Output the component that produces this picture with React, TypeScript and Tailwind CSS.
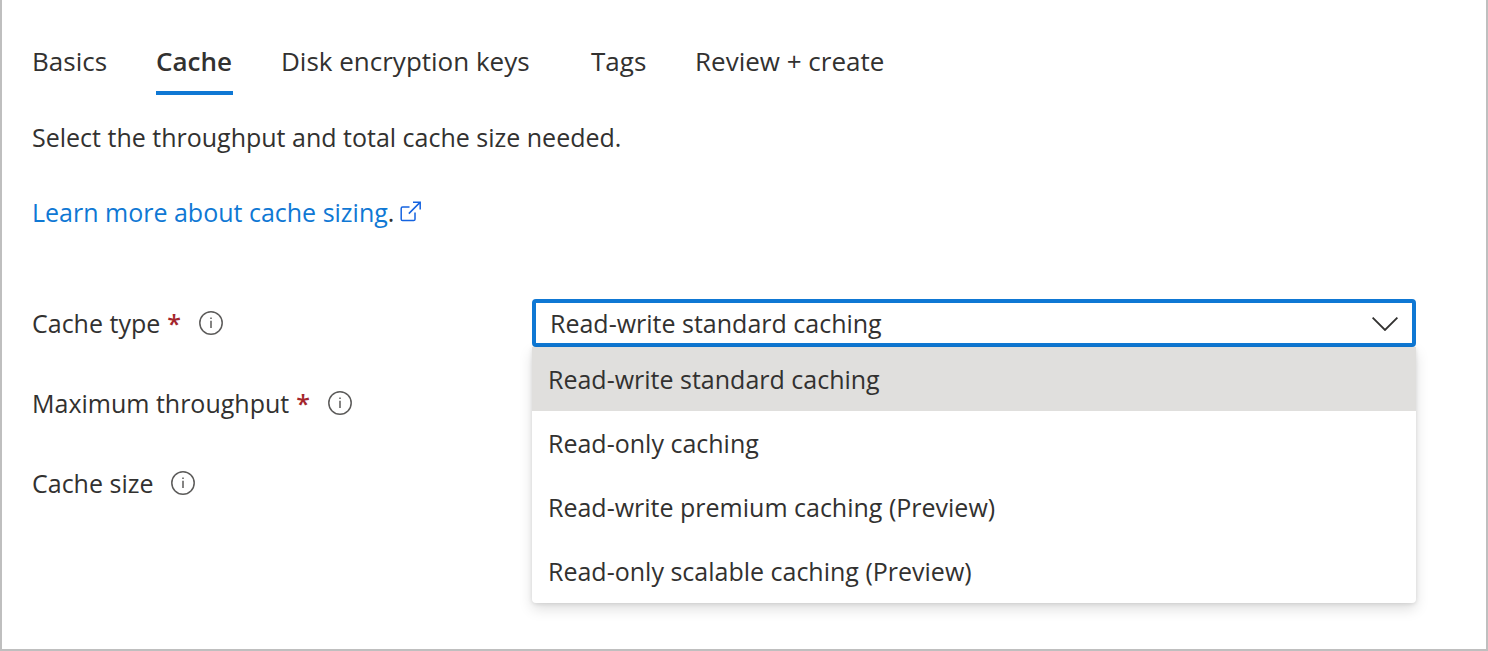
import { useState } from 'react';

const tabs = [
  { name: 'Basics', width: 'min-w-[76px]' },
  { name: 'Cache', width: 'min-w-[77px]' },
  { name: 'Disk encryption keys', width: 'min-w-[262px]' },
  { name: 'Tags', width: 'min-w-[56px]' },
  { name: 'Review + create', width: 'min-w-[196px]' },
];

const cacheTypes = [
  'Read-write standard caching',
  'Read-only caching',
  'Read-write premium caching (Preview)',
  'Read-only scalable caching (Preview)',
];

function InfoButton({ label }: { label: string }) {
  return (
    <button type="button" aria-label={label} className="shrink-0">
      <svg viewBox="0 0 24 24" className="size-6" fill="none" stroke="#5c5b5a">
        <circle cx="12" cy="12" r="11.2" strokeWidth="1.5" />
        <path d="M12 9.8V17M12 6.4V8" strokeWidth="1.5" />
      </svg>
    </button>
  );
}

function Required() {
  return <span className="ml-[7px] font-semibold text-[#a4262c]">*</span>;
}

export default function App() {
  const [tab, setTab] = useState('Cache');
  const [cacheType, setCacheType] = useState(cacheTypes[0]);

  return (
    <main className="min-h-screen border-x-2 border-b-2 border-[#bfbfbf] bg-white pr-[70px] pl-[30px] pt-9 font-['Open_Sans','Noto_Sans',sans-serif] text-[25px] leading-8 text-[#323130]">
      <nav className="flex gap-12 text-[26px]">
        {tabs.map(({ name, width }) => (
          <button
            key={name}
            type="button"
            onClick={() => setTab(name)}
            className={`${width} h-[59px] border-b-4 pb-1.5 text-left whitespace-nowrap ${
              tab === name ? 'border-[#0f78d4] font-semibold' : 'border-transparent'
            }`}
          >
            {name}
          </button>
        ))}
      </nav>

      <p className="mt-[26px]">Select the throughput and total cache size needed.</p>

      <p className="mt-[43px] flex items-center">
        <a href="#cache-sizing" className="text-[#0f78d4]">
          Learn more about cache sizing
        </a>
        .
        <svg viewBox="0 0 22 22" className="ml-1.5 size-[22px]" fill="none" stroke="#1563e0" strokeWidth="1.5" aria-hidden="true">
          <path d="M9.5 6H2.6Q1.2 6 1.2 7.4V18.2Q1.2 19.6 2.6 19.6H13.6Q15 19.6 15 18.2V11.5" />
          <path d="M8.8 12.6L20 1.4M13 1.2H20.2V8.4" />
        </svg>
      </p>

      <form className="mt-[71px] flex flex-col gap-8">
        <div className="flex items-center">
          <div className="flex w-[500px] shrink-0 items-center">
            <label htmlFor="cache-type">
              Cache type
              <Required />
            </label>
            <span className="ml-[18px] flex">
              <InfoButton label="About cache type" />
            </span>
          </div>
          <div className="relative flex-1">
            <select
              id="cache-type"
              value={cacheType}
              onChange={(e) => setCacheType(e.target.value)}
              className="block h-12 w-full appearance-none rounded-sm border-4 border-[#0f78d4] bg-white pr-16 pl-[14px] outline-none"
            >
              {cacheTypes.map((type) => (
                <option key={type}>{type}</option>
              ))}
            </select>
            <svg viewBox="0 0 26 14" className="pointer-events-none absolute top-[18px] right-[18px] h-[14px] w-[26px]" fill="none" stroke="#323130" strokeWidth="1.8" aria-hidden="true">
              <path d="M0.6 0.6L13 13L25.4 0.6" />
            </svg>
            <ul
              role="listbox"
              aria-label="Cache type"
              className="absolute inset-x-0 top-full overflow-hidden rounded-b-sm bg-white shadow-[0_6px_14px_rgba(0,0,0,0.13),0_1px_4px_rgba(0,0,0,0.11)]"
            >
              {cacheTypes.map((type) => (
                <li
                  key={type}
                  role="option"
                  aria-selected={type === cacheType}
                  onClick={() => setCacheType(type)}
                  className="flex h-16 items-center px-4 aria-selected:bg-[#e0dfdd]"
                >
                  {type}
                </li>
              ))}
            </ul>
          </div>
        </div>

        <div className="flex h-12 items-center">
          <span>
            Maximum throughput
            <Required />
          </span>
          <span className="ml-[18px] flex">
            <InfoButton label="About maximum throughput" />
          </span>
        </div>

        <div className="flex h-12 items-center">
          Cache size
          <span className="ml-[18px] flex">
            <InfoButton label="About cache size" />
          </span>
        </div>
      </form>
    </main>
  );
}
